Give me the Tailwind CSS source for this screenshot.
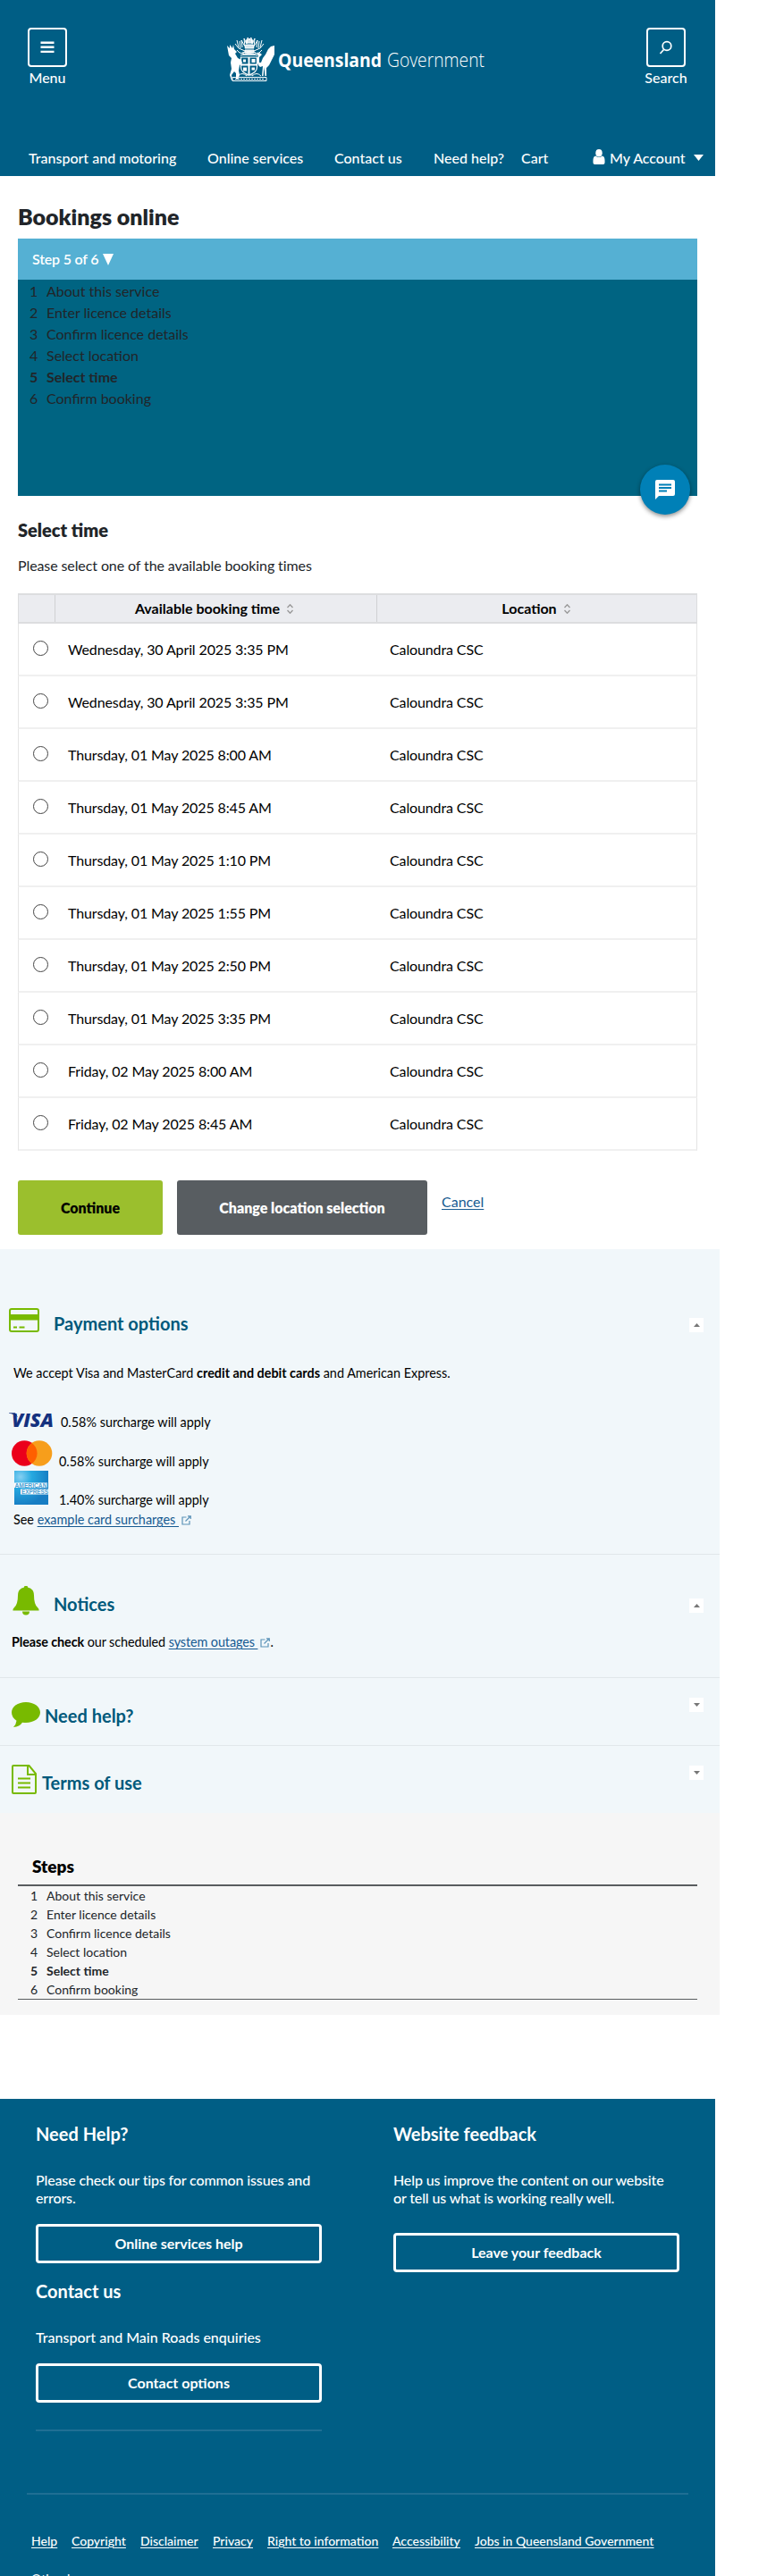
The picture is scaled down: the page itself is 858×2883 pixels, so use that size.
<!DOCTYPE html>
<html lang="en">
<head>
<meta charset="utf-8">
<title>Bookings online</title>
<script src="https://cdn.jsdelivr.net/npm/@tailwindcss/browser@4"></script>
</head>
<body class="bg-white text-black text-base font-['Lato',sans-serif] h-[2883px] overflow-hidden">

<header class="w-[800px] h-[197px] bg-[#005e85] text-white flex flex-col">
  <div class="h-[165px] pt-[31px] pl-[25px] flex items-start">
    <div class="w-14 flex flex-col items-center">
      <div class="size-11 border-2 border-white rounded flex items-center justify-center">
        <svg class="w-4 h-4" viewBox="0 0 16 16" fill="#fff"><path d="M0.5 1.5h15v2.4h-15zM0.5 6.6h15v2.4h-15zM0.5 11.7h15v2.4h-15z"/></svg>
      </div>
      <span class="leading-6 font-medium">Menu</span>
    </div>
    <svg class="mt-[7px] ml-[172px] w-[310px] h-[56px] overflow-visible" viewBox="0 0 310 56" fill="#fff">
      <g id="crest">
        <path d="M1 13l3 3 0-4 3 4 1-4 1 5 3 3-2 2 3 5 4 2 1 4-3 2-1 6 1 5-2 5h-2l0-7-2-2-3 4 1 6H6l-2-6 2-7-1-7 1-5-3-3z"/>
        <path d="M54 13l-4 1-3 3-3 6-3 4-2 5h-2v-6l3-3-3-2-3 2 2 1-2 6 2 5 2 2 3-1-1 11h1.500l1-10 1 10h1.500V38l3-3 3-6 3-6z"/>
        <path d="M16.500 26h18v11q0 6-9 9-9-3-9-9z" fill="none" stroke="#fff" stroke-width="1.200"/>
        <path d="M17 34.500h17M25.500 26v19" stroke="#fff" stroke-width="2"/>
        <path d="M19 28.500h3v3h-3zM28.500 28h4v4h-4zM19 37.500h4v4h-4zM28.500 37.500h3.500v3H28.500z"/>
        <path d="M16 24q9-5 19 0M18 21q8-3 15 0M21 18h10v3H21zM22 12h8l1 4H21zM23 6h6l1 4h-8z" fill-opacity=".85" stroke="#fff" stroke-width="1"/>
        <path d="M21 19l-7-3-4-5m4 4l-2-8m4 9l-1-8m3 7l-1-8 4 7-1-9 3 6 1-7 2 2 2-2 1 7 3-6-1 9 4-7-1 8m3-7l-1 8m4-9l-2 8m4-4l-4 5-7 3M20 22l-5-1-3-3M32 22l5-1 3-3" fill="none" stroke="#fff" stroke-width="1"/>
        <path d="M7 48.500h38v4H7z" fill="none" stroke="#fff"/><path d="M10 50.500h32" stroke="#fff" stroke-dasharray="2 1"/>
        <path d="M13 47q5-5 10 0M29 47q5-5 10 0M22 46h8" fill="none" stroke="#fff"/>
      </g>
      <text x="58" y="37" font-family="Open Sans" font-weight="700" font-size="21.500" textLength="116" lengthAdjust="spacingAndGlyphs">Queensland</text>
      <text x="180" y="37" font-family="Open Sans" font-weight="300" font-size="21.500" textLength="109" lengthAdjust="spacingAndGlyphs">Government</text>
    </svg>
    <div class="ml-[154px] w-14 flex flex-col items-center">
      <div class="size-11 border-2 border-white rounded flex items-center justify-center">
        <svg class="w-4 h-4" viewBox="0 0 16 16" fill="none" stroke="#fff" stroke-width="1.700"><circle cx="9" cy="6.500" r="4.800"/><path d="M5.500 10.500L1.500 15"/></svg>
      </div>
      <span class="leading-6 font-medium">Search</span>
    </div>
  </div>
  <nav class="flex pl-8 leading-6 font-medium whitespace-nowrap">
    <span class="w-[200px]">Transport and motoring</span>
    <span class="w-[142px]">Online services</span>
    <span class="w-[111px]">Contact us</span>
    <span class="w-[98px]">Need help?</span>
    <span class="w-[80px]">Cart</span>
    <svg class="w-[14px] h-[17px] mt-[2px] mr-[5px]" viewBox="0 0 15 16" preserveAspectRatio="none" fill="#fff"><ellipse cx="7.500" cy="4" rx="4" ry="4"/><path d="M3.500 7q4 3 8 0 3 .5 3 5v2q0 2-2 2h-10q-2 0-2-2v-2q0-4.500 3-5z"/></svg>
    <span class="w-[94px]">My Account</span>
    <svg class="w-[11px] h-[7px] mt-2" viewBox="0 0 11 7" fill="#fff"><path d="M0 0h11L5.500 7z"/></svg>
  </nav>
</header>

<main class="h-[1201px] pt-[29px] pl-5">
  <h1 class="text-[25px] leading-8 font-extrabold text-[#212529] h-[41px]">Bookings online</h1>
  <section class="w-[760px] h-[288px] bg-[#006482] text-[#212529] relative">
    <div class="h-[46px] bg-[#55b0d3] text-white font-semibold tracking-[-0.2px] pl-4 flex items-center gap-[5px]">Step 5 of 6
      <svg class="w-3 h-[13px]" viewBox="0 0 12 13" fill="#fff"><path d="M0 0h12L6 13z"/></svg>
    </div>
    <ol class="pt-px leading-6">
      <li class="flex"><span class="w-8 pl-[13px]">1</span>About this service</li>
      <li class="flex"><span class="w-8 pl-[13px]">2</span>Enter licence details</li>
      <li class="flex"><span class="w-8 pl-[13px]">3</span>Confirm licence details</li>
      <li class="flex"><span class="w-8 pl-[13px]">4</span>Select location</li>
      <li class="flex font-bold"><span class="w-8 pl-[13px]">5</span>Select time</li>
      <li class="flex"><span class="w-8 pl-[13px]">6</span>Confirm booking</li>
    </ol>
    <button class="absolute right-2 top-[253px] size-14 rounded-full bg-[#0080b7] shadow-[0_2px_5px_rgba(0,0,0,0.45)] flex items-center justify-center">
      <svg class="size-[22px]" viewBox="0 0 22 22"><path d="M2 0h18q2 0 2 2v14q0 2-2 2H4l-4 4V2q0-2 2-2z" fill="#fff"/><path d="M4 4.400h14v2H4zM4 7.900h14v2H4zM4 11.400h9v2H4z" fill="#0080b7"/></svg>
    </button>
  </section>
  <h2 class="mt-[24px] text-xl leading-7 font-extrabold text-[#212529]">Select time</h2>
  <p class="mt-[14px] leading-6 tracking-[-0.1px] text-[#212529]">Please select one of the available booking times</p>

  <div class="mt-[19px] w-[760px] h-[624px]">
    <div class="h-[34px] grid grid-cols-[41px_360px_359px] bg-[#ebecf0] font-bold border border-y-2 border-[#dcdddf]">
      <span class="border-r border-[#d0d1d3]"></span>
      <span class="border-r border-[#d0d1d3] flex items-center justify-center gap-2 pr-1">Available booking time<svg class="w-[7px] h-[11px]" viewBox="0 0 7 11" fill="none" stroke="#999" stroke-width="1.400"><path d="M.5 4L3.500.800 6.500 4M.5 7l3 3.200L6.500 7"/></svg></span>
      <span class="flex items-center justify-center gap-2 pr-1">Location<svg class="w-[7px] h-[11px]" viewBox="0 0 7 11" fill="none" stroke="#999" stroke-width="1.400"><path d="M.5 4L3.500.800 6.500 4M.5 7l3 3.200L6.500 7"/></svg></span>
    </div>
    <div id="slots"></div>
  </div>

  <div class="mt-[33px] flex gap-4">
    <button class="w-[162px] h-[61px] rounded-[3px] bg-[#9bbf2d] font-extrabold">Continue</button>
    <button class="w-[280px] h-[61px] rounded-[3px] bg-[#585d61] text-white font-extrabold">Change location selection</button>
    <a class="mt-[12px] leading-6 text-[#165a91] underline underline-offset-2">Cancel</a>
  </div>
</main>

<aside class="w-[805px] h-[631px] bg-[#f1f7fa] text-[14.400px]">
  <section class="h-[342px] border-b border-[#e1e7ea] pt-[66px]">
    <div class="h-[61px] flex items-start">
      <svg class="ml-[10px] w-[34px] h-[27px]" viewBox="0 0 34 27"><rect x="1" y="1" width="32" height="25" rx="2" fill="none" stroke="#78ba00" stroke-width="2"/><path d="M1 7h32v6.500H1zM5 20.500h4v2H5zM11.500 20.500h6v2h-6z" fill="#78ba00"/></svg>
      <h2 class="ml-[16px] mt-[3px] w-[711px] text-xl leading-7 font-bold text-[#00597b]">Payment options</h2>
      <span class="mt-[11px] size-4 bg-white flex items-center justify-center"><svg class="w-[7px] h-[4px]" viewBox="0 0 7 4" fill="#777"><path d="M0 4h7L3.500 0z"/></svg></span>
    </div>
    <p class="pl-[15px] leading-6">We accept Visa and MasterCard <b>credit and debit cards</b> and American Express.</p>
    <div class="mt-[33px] h-[28px] pl-[10px] flex items-start">
      <svg class="-mt-px w-[58px] h-[16px] overflow-visible" viewBox="0 0 58 16" fill="#14317f"><text x="3" y="15.700" font-family="Open Sans" font-style="italic" font-weight="800" font-size="21.500" textLength="47" lengthAdjust="spacingAndGlyphs">VISA</text><path d="M0 .3h7l3 5Q6 1.500 0 .8z"/></svg>
      <span class="leading-6 -mt-[2px]">0.58% surcharge will apply</span>
    </div>
    <div class="h-[39px] pl-[13px] flex items-start">
      <svg class="mt-[2px] w-[53px] h-[29px]" viewBox="0 0 53 29"><circle cx="14.300" cy="14.500" r="14.300" fill="#eb001b"/><circle cx="31" cy="14.500" r="14.300" fill="#f79e1b"/><path d="M22.650 2.900a14.300 14.300 0 0 1 0 23.200a14.300 14.300 0 0 1 0-23.200z" fill="#ff5f00"/></svg>
      <span class="leading-6 mt-[14px]">0.58% surcharge will apply</span>
    </div>
    <div class="h-[41px] pl-[16px] flex items-start">
      <svg class="-mt-[3px] w-[50px] h-[38px]" viewBox="0 0 50 38"><defs><radialGradient id="amex" cx=".18" cy=".18" r=".85"><stop offset="0" stop-color="#86d0f2"/><stop offset=".4" stop-color="#26a9e0"/><stop offset="1" stop-color="#177dc3"/></radialGradient></defs><path d="M0 0h38v38H0z" fill="url(#amex)"/><path d="M0 13.500h37v5.500H0zM7 20.500h31v6H7z" fill="#fff"/><g font-family="Liberation Sans" font-weight="700" font-size="6.500" fill="#4b9fd3"><text x=".5" y="18.600" textLength="36" lengthAdjust="spacingAndGlyphs">AMERICAN</text><text x="8" y="25.900" textLength="30" lengthAdjust="spacingAndGlyphs">EXPRESS</text></g></svg>
      <span class="leading-6 mt-[18px]">1.40% surcharge will apply</span>
    </div>
    <p class="pl-[15px] leading-6 flex items-center whitespace-pre -mt-px">See <a class="text-[#165a91] underline underline-offset-2">example card surcharges </a><svg class="ml-[3px] size-[11px]" viewBox="0 0 11 11" fill="none" stroke="#5c93b8" stroke-width="1.200"><path d="M5.500 2H1v8h8V6M7 .8h3.300V4M10 1L4.500 6.500"/></svg></p>
  </section>
  <section class="h-[138px] border-b border-[#e1e7ea] pt-[35px]">
    <div class="h-[51px] flex items-start">
      <svg class="ml-[14px] w-[30px] h-[33px]" viewBox="0 0 30 33" fill="#78ba00"><path d="M13 1.500a2 2 0 0 1 4 0q7 1.500 7 9 0 10 4 13.500 2 2 1.500 3.500H.5Q0 26 2 24q4-3.500 4-13.500 0-7.500 7-9zM11 28.500h8a4 4 0 0 1-8 0z"/></svg>
      <h2 class="ml-[16px] mt-[6px] w-[711px] text-xl leading-7 font-bold text-[#00597b]">Notices</h2>
      <span class="mt-[14px] size-4 bg-white flex items-center justify-center"><svg class="w-[7px] h-[4px]" viewBox="0 0 7 4" fill="#777"><path d="M0 4h7L3.500 0z"/></svg></span>
    </div>
    <p class="pl-[13px] leading-6 tracking-[-0.1px] flex items-center whitespace-pre"><b>Please check</b> our scheduled <a class="text-[#165a91] underline underline-offset-2">system outages </a><svg class="ml-[3px] size-[11px]" viewBox="0 0 11 11" fill="none" stroke="#5c93b8" stroke-width="1.200"><path d="M5.500 2H1v8h8V6M7 .8h3.300V4M10 1L4.500 6.500"/></svg>.</p>
  </section>
  <section class="h-[76px] border-b border-[#e1e7ea] pt-[22px] flex items-start">
    <svg class="mt-[5px] ml-[13px] w-8 h-[28px]" viewBox="0 0 32 28" fill="#78ba00"><path d="M16 0c9 0 16 5 16 11.500S25 23 16 23q-2 0-4-.3Q9 27.500 2 28q3-3 3.500-7.300Q0 17 0 11.500C0 5 7 0 16 0z"/></svg>
    <h2 class="ml-[5px] mt-[6px] w-[721px] text-xl leading-7 font-bold text-[#00597b]">Need help?</h2>
    <span class="size-4 bg-white flex items-center justify-center"><svg class="w-[7px] h-[4px]" viewBox="0 0 7 4" fill="#777"><path d="M0 0h7L3.500 4z"/></svg></span>
  </section>
  <section class="h-[75px] pt-[21px] flex items-start">
    <svg class="ml-[13px] w-[28px] h-[33px]" viewBox="0 0 28 33" fill="none" stroke="#78ba00" stroke-width="2"><path d="M2 1h17.500l7.500 9v21q0 1-1 1H2q-1 0-1-1V2q0-1 1-1zM18 1v10h9M7 15.500h14M7 20.500h14M7 25.500h14"/></svg>
    <h2 class="ml-[6px] mt-[6px] w-[724px] text-xl leading-7 font-bold text-[#00597b]">Terms of use</h2>
    <span class="mt-px size-4 bg-white flex items-center justify-center"><svg class="w-[7px] h-[4px]" viewBox="0 0 7 4" fill="#777"><path d="M0 0h7L3.500 4z"/></svg></span>
  </section>
</aside>

<section class="w-[805px] h-[226px] bg-[#f6f6f6] pl-5 pt-[46px]">
  <div class="w-[760px] border-b border-[#595c5f]">
    <h2 class="h-[36px] pl-4 text-[19px] leading-7 font-extrabold border-b-2 border-[#595c5f]">Steps</h2>
    <ol class="h-[126px] text-sm leading-[21px] text-[#212529]">
      <li class="flex"><span class="w-8 pl-[14px]">1</span>About this service</li>
      <li class="flex"><span class="w-8 pl-[14px]">2</span>Enter licence details</li>
      <li class="flex"><span class="w-8 pl-[14px]">3</span>Confirm licence details</li>
      <li class="flex"><span class="w-8 pl-[14px]">4</span>Select location</li>
      <li class="flex font-bold"><span class="w-8 pl-[14px]">5</span>Select time</li>
      <li class="flex"><span class="w-8 pl-[14px]">6</span>Confirm booking</li>
    </ol>
  </div>
</section>

<footer class="mt-[94px] w-[800px] h-[534px] bg-[#005e85] text-white font-medium pt-[25px] overflow-hidden">
  <div class="h-[416px] pl-10 flex gap-20">
    <div class="w-80">
      <h2 class="text-xl leading-7 font-bold">Need Help?</h2>
      <p class="mt-[28px] leading-5 tracking-[-0.14px]">Please check our tips for common issues and errors.</p>
      <button class="mt-[19px] w-full h-11 border-3 border-white rounded font-bold">Online services help</button>
      <h2 class="mt-[17px] text-xl leading-7 font-bold">Contact us</h2>
      <p class="mt-[28px] leading-5">Transport and Main Roads enquiries</p>
      <button class="mt-[19px] w-full h-11 border-3 border-white rounded font-bold">Contact options</button>
      <hr class="mt-[30px] border-t-2 border-[#1f6f94]">
    </div>
    <div class="w-80">
      <h2 class="text-xl leading-7 font-bold">Website feedback</h2>
      <p class="mt-[28px] leading-5 tracking-[-0.14px]">Help us improve the content on our website or tell us what is working really well.</p>
      <button class="mt-[29px] w-full h-11 border-3 border-white rounded font-bold">Leave your feedback</button>
    </div>
  </div>
  <div class="mx-[30px] border-t-2 border-[#1f6f94] pl-[5px] pt-[41px] text-sm">
    <div class="grid grid-cols-[45px_77px_81px_61px_140px_92px_200px] leading-[21px] underline underline-offset-2 whitespace-nowrap">
      <a>Help</a><a>Copyright</a><a>Disclaimer</a><a>Privacy</a><a>Right to information</a><a>Accessibility</a><a>Jobs in Queensland Government</a>
    </div>
    <a class="block mt-[21px] leading-[21px]">Other languages</a>
  </div>
</footer>

<script>
  const times = ["Wednesday, 30 April 2025 3:35 PM", "Wednesday, 30 April 2025 3:35 PM", "Thursday, 01 May 2025 8:00 AM", "Thursday, 01 May 2025 8:45 AM", "Thursday, 01 May 2025 1:10 PM", "Thursday, 01 May 2025 1:55 PM", "Thursday, 01 May 2025 2:50 PM", "Thursday, 01 May 2025 3:35 PM", "Friday, 02 May 2025 8:00 AM", "Friday, 02 May 2025 8:45 AM"];
  document.getElementById("slots").innerHTML = times.map(t => `<div class="h-[59px] flex items-center border-x border-x-[#e4e4e4] border-b-2 border-b-[#f0f0f0] tracking-[-0.12px]"><span class="size-[17px] ml-4 -mt-[2px] rounded-full border border-[#444] bg-white"></span><span class="ml-[22px] w-[360px]">${t}</span><span>Caloundra CSC</span></div>`).join("");
</script>
</body>
</html>
